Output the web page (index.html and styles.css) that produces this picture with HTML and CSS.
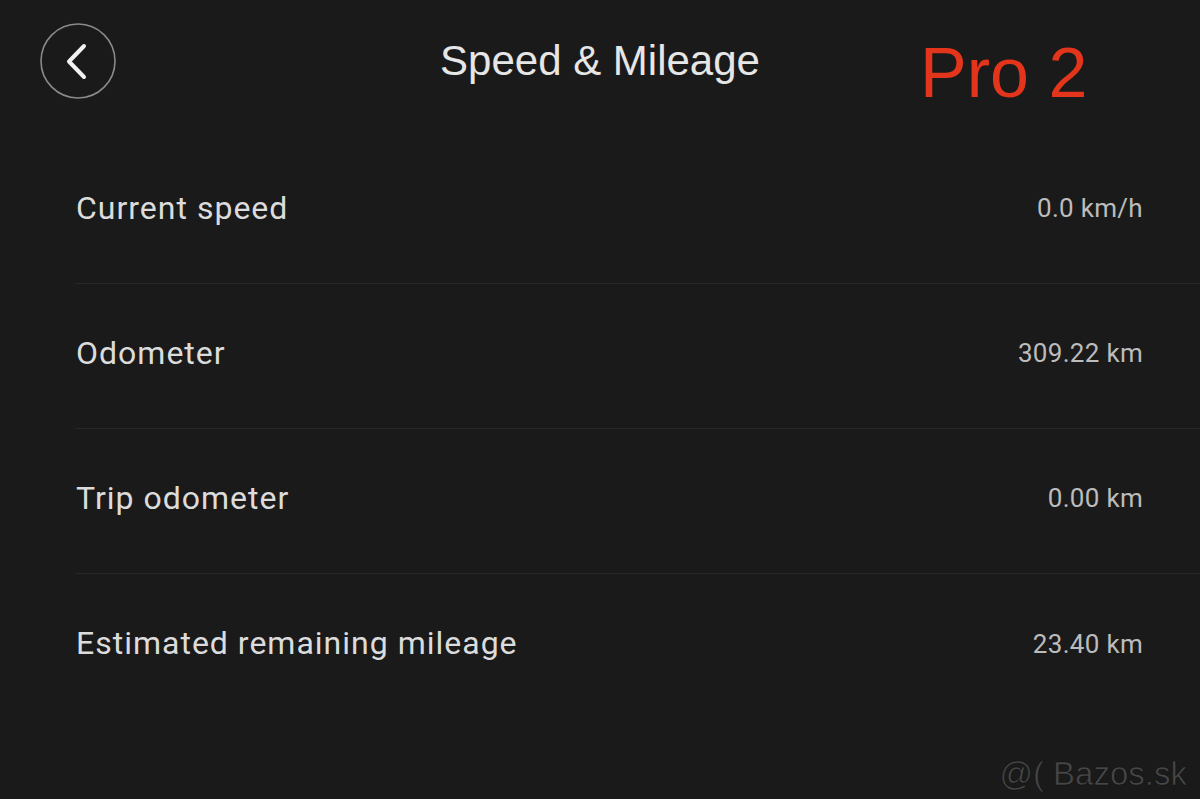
FILE: index.html
```html
<!DOCTYPE html>
<html>
<head>
<meta charset="utf-8">
<link rel="stylesheet" href="styles.css">
</head>
<body>
<div class="screen">
  <header class="header">
    <button class="back" aria-label="Back">
      <svg width="76" height="76" viewBox="0 0 76 76">
        <circle cx="38" cy="38" r="37" fill="none" stroke="#8a8a8a" stroke-width="1.6"/>
        <path d="M44 23 L29 38.5 L44 54" fill="none" stroke="#f2f2f2" stroke-width="4" stroke-linecap="round" stroke-linejoin="round"/>
      </svg>
    </button>
    <h1 class="title">Speed &amp; Mileage</h1>
    <div class="spacer"></div>
  </header>
  <div class="badge">Pro 2</div>
  <ul class="list">
    <li class="row"><span class="label">Current speed</span><span class="value">0.0 km/h</span></li>
    <li class="row"><span class="label">Odometer</span><span class="value">309.22 km</span></li>
    <li class="row"><span class="label">Trip odometer</span><span class="value">0.00 km</span></li>
    <li class="row"><span class="label">Estimated remaining mileage</span><span class="value">23.40 km</span></li>
  </ul>
  <div class="watermark">@( Bazos.sk</div>
</div>
</body>
</html>
```
FILE: styles.css
```css
html, body {
  margin: 0;
  padding: 0;
  background: #1a1a1a;
}
.screen {
  position: relative;
  width: 1200px;
  height: 799px;
  overflow: hidden;
  background: #1a1a1a;
}
.header {
  height: 124px;
  display: flex;
  align-items: center;
  padding-left: 40px;
  box-sizing: border-box;
}
.back {
  width: 76px;
  height: 76px;
  padding: 0;
  margin: 0;
  border: 0;
  background: none;
  display: flex;
  margin-top: -3px;
}
.title {
  flex: 1;
  margin: 0;
  text-align: center;
  font-family: "Liberation Sans", Arial, sans-serif;
  font-weight: normal;
  font-size: 42px;
  color: #e6e6e6;
  margin-right: 116px;
  margin-top: -2px;
}
.spacer { width: 0; }
.badge {
  position: absolute;
  left: 920px;
  top: 31px;
  font-family: "Liberation Sans", Arial, sans-serif;
  font-size: 70px;
  color: #e3341c;
  line-height: 1.2;
}
.list {
  list-style: none;
  margin: 0;
  padding: 15px 0 0 75px;
}
.row {
  height: 145px;
  display: flex;
  align-items: center;
  justify-content: space-between;
  padding-right: 57px;
  border-bottom: 1px solid #272727;
  box-sizing: border-box;
}
.row:last-child { border-bottom: 0; }
.label {
  font-family: Roboto, "Noto Sans", sans-serif;
  font-weight: 400;
  font-size: 32px;
  letter-spacing: 1px;
  color: #dcdcdc;
  padding-left: 1px;
  margin-top: -7px;
}
.value {
  font-family: Roboto, "Noto Sans", sans-serif;
  font-weight: 400;
  font-size: 26px;
  letter-spacing: 0.3px;
  color: #bcbcbc;
  margin-top: -6px;
}
.watermark {
  position: absolute;
  right: 13px;
  bottom: 6px;
  font-family: "Liberation Sans", Arial, sans-serif;
  font-size: 33px;
  color: #474747;
  -webkit-text-stroke: 0.6px #111;
}
```
